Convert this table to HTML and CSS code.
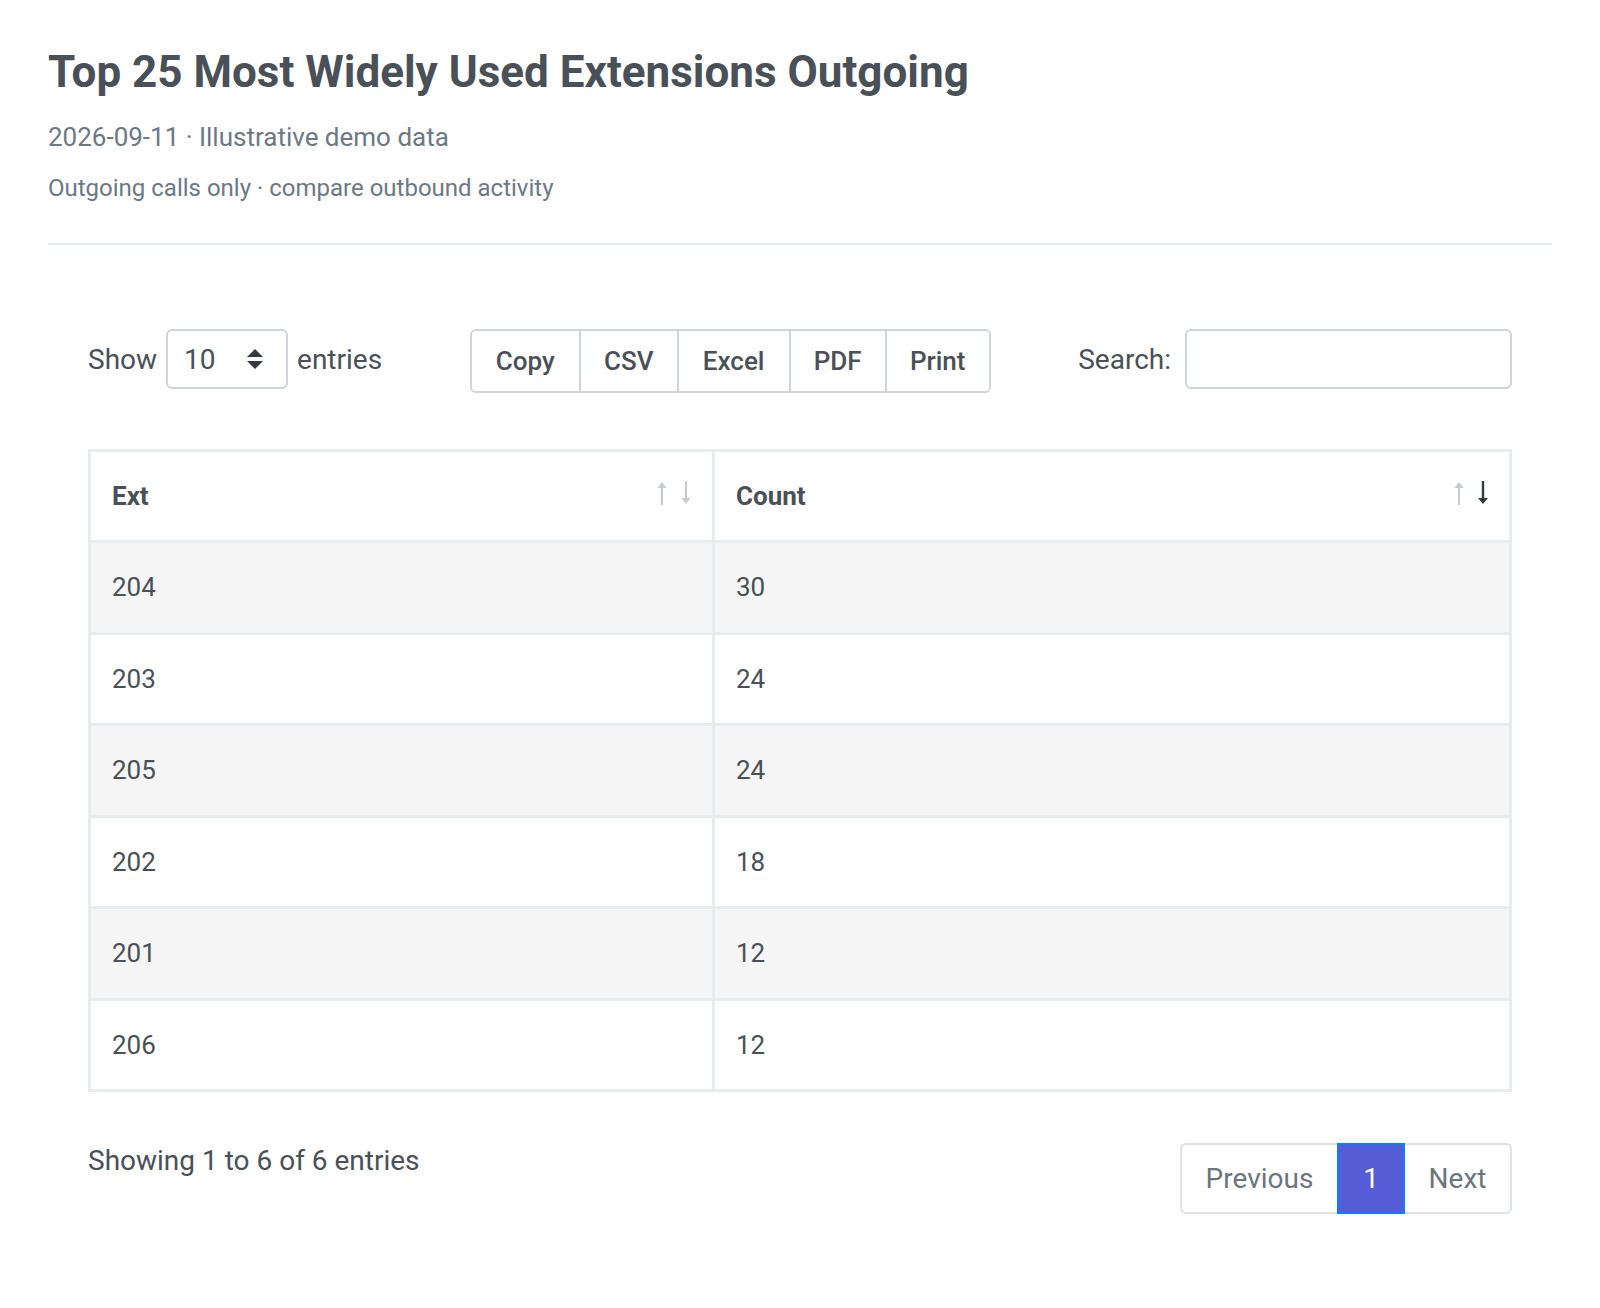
FILE: index.html
```html
<!DOCTYPE html>
<html lang="en">
<head>
<meta charset="utf-8">
<title>Top 25 Most Widely Used Extensions Outgoing</title>
<link rel="stylesheet" href="styles.css">
</head>
<body>
<div class="page">
  <header class="head">
    <h1 class="title">Top 25 Most Widely Used Extensions Outgoing</h1>
    <p class="meta">2026-09-11 · Illustrative demo data</p>
    <p class="note">Outgoing calls only · compare outbound activity</p>
  </header>
  <section class="report">
    <div class="controls">
      <div class="length">
        <span>Show</span>
        <div class="select">
          <span>10</span>
          <svg class="caret" width="18" height="24" viewBox="0 0 18 24"><polygon points="1,10 9,2 17,10" fill="#343a40"/><polygon points="1,14 9,22 17,14" fill="#343a40"/></svg>
        </div>
        <span>entries</span>
      </div>
      <div class="buttons">
        <button class="btn b-copy">Copy</button><button class="btn b-csv">CSV</button><button class="btn b-excel">Excel</button><button class="btn b-pdf">PDF</button><button class="btn b-print">Print</button>
      </div>
      <div class="search">
        <span>Search:</span>
        <div class="input"></div>
      </div>
    </div>
    <table class="grid">
      <thead>
        <tr>
          <th class="c-ext"><div class="th-in"><span>Ext</span>
            <svg class="sort" width="40" height="26" viewBox="0 0 40 26"><g fill="none" stroke="#c8cbce" stroke-width="2"><line x1="8" y1="25" x2="8" y2="4"/></g><polygon points="3.5,8 8,2 12.5,8" fill="#c8cbce"/><g stroke="#c8cbce" stroke-width="2"><line x1="32" y1="1" x2="32" y2="22"/></g><polygon points="27.5,18 32,24 36.5,18" fill="#c8cbce"/></svg>
          </div></th>
          <th class="c-count"><div class="th-in"><span>Count</span>
            <svg class="sort" width="40" height="26" viewBox="0 0 40 26"><g stroke="#c8cbce" stroke-width="2"><line x1="8" y1="25" x2="8" y2="4"/></g><polygon points="3.5,8 8,2 12.5,8" fill="#c8cbce"/><g stroke="#343a40" stroke-width="2.4"><line x1="32" y1="1" x2="32" y2="22"/></g><polygon points="27,18 32,24 37,18" fill="#343a40"/></svg>
          </div></th>
        </tr>
      </thead>
      <tbody>
        <tr class="odd"><td>204</td><td>30</td></tr>
        <tr><td>203</td><td>24</td></tr>
        <tr class="odd"><td>205</td><td>24</td></tr>
        <tr><td>202</td><td>18</td></tr>
        <tr class="odd"><td>201</td><td>12</td></tr>
        <tr><td>206</td><td>12</td></tr>
      </tbody>
    </table>
    <div class="footer">
      <div class="info">Showing 1 to 6 of 6 entries</div>
      <nav class="pager">
        <span class="pg pg-prev">Previous</span><span class="pg pg-cur">1</span><span class="pg pg-next">Next</span>
      </nav>
    </div>
  </section>
</div>
</body>
</html>
```
FILE: styles.css
```css
* { box-sizing: border-box; }
html, body { margin: 0; padding: 0; background: #fff; }
body {
  font-family: Roboto, "Liberation Sans", Arial, sans-serif;
  color: #495057;
}
.page { padding: 46px 48px 95px; }
.head { border-bottom: 2px solid #e9ecef; padding-bottom: 40px; }
.title {
  margin: 0;
  font-size: 44px;
  line-height: 52px;
  font-weight: 700;
  color: #495057;
}
.meta {
  margin: 23px 0 0;
  font-size: 26px;
  line-height: 32px;
  color: #6c7885;
}
.note {
  margin: 20px 0 0;
  font-size: 24px;
  line-height: 30px;
  color: #6c7885;
}
.report { padding: 84px 40px 0; }
.controls {
  display: flex;
  justify-content: space-between;
  align-items: flex-start;
  font-size: 28px;
}
.length, .search { display: flex; align-items: center; height: 60px; gap: 9px; }
.select {
  width: 122px;
  height: 60px;
  border: 2px solid #ced4da;
  border-radius: 6px;
  display: flex;
  align-items: center;
  justify-content: space-between;
  padding: 0 22px 0 16px;
}
.input {
  width: 327px;
  height: 60px;
  border: 2px solid #ced4da;
  border-radius: 6px;
  margin-left: 5px;
}
.buttons { display: flex; border: 2px solid #ced4da; border-radius: 6px; overflow: hidden; }
.btn {
  font-family: inherit;
  font-size: 26px;
  font-weight: 500;
  color: #495057;
  background: #fff;
  border: 0;
  border-left: 2px solid #ced4da;
  height: 60px;
  padding: 0;
}
.btn:first-child { border-left: 0; }
.b-copy { width: 107px; }
.b-csv { width: 98px; }
.b-excel { width: 112px; }
.b-pdf { width: 96px; }
.b-print { width: 104px; }
.grid {
  margin-top: 56px;
  width: 100%;
  border-collapse: collapse;
  border: 3px solid #e9ecef;
  font-size: 26px;
}
.grid th, .grid td { border: 3px solid #e9ecef; text-align: left; }
.grid th { padding: 0 18px 0 21px; height: 91px; font-weight: 700; }
.c-ext { width: 624px; }
.th-in { display: flex; justify-content: space-between; align-items: center; }
.sort { margin-top: -6px; }
.grid td { padding: 0 21px; height: 91.5px; line-height: 38px; }
.grid tr.odd td { background: #f5f5f5; }
.footer {
  margin-top: 51px;
  display: flex;
  justify-content: space-between;
  align-items: flex-start;
}
.info { font-size: 28px; line-height: 36px; }
.pager { display: flex; border: 2px solid #dee2e6; border-radius: 6px; height: 71px; }
.pg {
  display: flex;
  align-items: center;
  justify-content: center;
  font-size: 28px;
  color: #6c757d;
}
.pg-prev { width: 155px; }
.pg-cur { width: 68px; background: #565bd6; color: #fff; border: 2px solid #0d7cff; margin: -2px 0; }
.pg-next { width: 105px; }
```
